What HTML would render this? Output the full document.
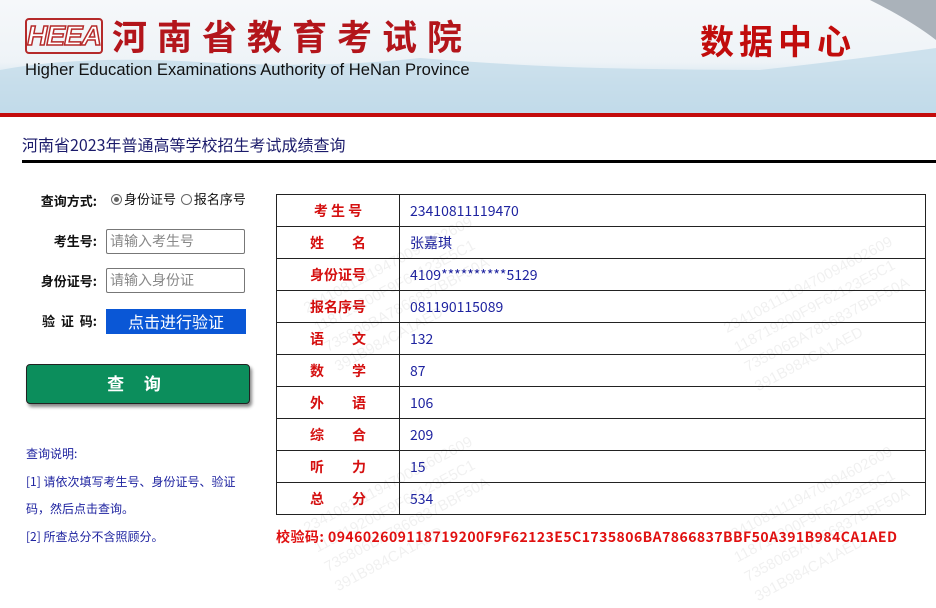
<!DOCTYPE html>
<html><head><meta charset="utf-8"><style>
*{margin:0;padding:0;box-sizing:border-box}
body{width:936px;height:551px;overflow:hidden;background:#fff;font-family:"Liberation Sans","Noto Sans CJK SC",sans-serif;position:relative}
.ab{position:absolute}
#ban{left:0;top:0;width:936px;height:113px;background:linear-gradient(180deg,#f6f8fa 0%,#eef3f7 55%,#cfe2ee 75%,#b6d5e8 100%);overflow:hidden}
#red{left:0;top:113px;width:936px;height:4px;background:#c40c0c}
.logo{left:25px;top:18px;width:78px;height:36px;border:2px solid #b52a2a;border-radius:4px;color:#fff;font:italic bold 28px/32px "Liberation Sans",sans-serif;text-align:center;-webkit-text-stroke:1.5px #b52a2a;letter-spacing:-1px}
.cn{left:112px;top:14px;font:bold 35px/44px "Noto Sans CJK SC",sans-serif;color:#b3151b;letter-spacing:10px}
.en{left:25px;top:60px;font:16.6px/20px "Liberation Sans",sans-serif;color:#111}
.dc{left:700px;top:18px;font:bold 34px/44px "Noto Sans CJK SC",sans-serif;color:#c10c0c;letter-spacing:5px}
.title{left:22px;top:134px;font:16px/20px "Noto Sans CJK SC",sans-serif;color:#1b1b6b}
#ln{left:22px;top:160px;width:914px;height:3px;background:#000}
.lb{font:bold 13px/20px "Noto Sans CJK SC",sans-serif;color:#111;text-align:right;width:80px;left:17px;white-space:nowrap}
.inp{left:106px;width:139px;height:25px;border:1px solid #777;border-radius:2px;font:14px/23px "Noto Sans CJK SC",sans-serif;color:#888;padding-left:3px}
.rad{font:13px/16px "Noto Sans CJK SC",sans-serif;color:#111}
.rad i{display:inline-block;width:11px;height:11px;border:1px solid #666;border-radius:50%;vertical-align:-1px;margin-right:2px;position:relative}
.rad i.on:after{content:"";position:absolute;left:2px;top:2px;width:5px;height:5px;border-radius:50%;background:#666}
.ver{left:106px;top:309px;width:140px;height:25px;background:#0a57d6;color:#fff;font:16px/25px "Noto Sans CJK SC",sans-serif;text-align:center}
.btn{left:26px;top:364px;width:224px;height:40px;background:#0c8e5c;border-radius:4px;box-shadow:2px 3px 3px #888;border:1px solid #222;color:#fff;font:bold 17px/36px "Noto Sans CJK SC",sans-serif;text-align:center;letter-spacing:8px}
.note{left:26px;font:12px/16px "Noto Sans CJK SC",sans-serif;color:#1e23a0}
table{position:absolute;left:276px;top:194px;width:650px;border-collapse:collapse}
td{border:1px solid #222;height:32px;font:14px/16px "Noto Sans CJK SC",sans-serif}
td.k{width:123px;color:#d51010;font-weight:bold;text-align:center}
td.v{color:#1e23a0;padding-left:10px}
.wm{color:rgba(0,0,0,.06);font:15px "Liberation Sans",sans-serif;transform:rotate(-28deg);transform-origin:left top;white-space:nowrap;line-height:22px}
.chk{left:276px;top:527px;font:bold 14px/20px "Noto Sans CJK SC",sans-serif;color:#e01010;letter-spacing:.45px}
</style></head><body>
<div id="ban" class="ab">
<svg class="ab" style="left:0;top:0" width="936" height="113"><path d="M0 70 Q80 55 200 62 T420 58 Q520 66 600 68 T760 70 Q850 60 936 48 L936 113 L0 113Z" fill="#c4dcea" opacity=".8"/><path d="M870 0 L936 0 L936 40 Q910 20 870 0Z" fill="#aab2ba"/></svg>
</div>
<div id="red" class="ab"></div>
<div class="ab logo">HEEA</div>
<div class="ab cn">河南省教育考试院</div>
<div class="ab en">Higher Education Examinations Authority of HeNan Province</div>
<div class="ab dc">数据中心</div>
<div class="ab title">河南省2023年普通高等学校招生考试成绩查询</div>
<div id="ln" class="ab"></div>

<div class="ab lb" style="top:191px">查询方式:</div>
<div class="ab rad" style="left:111px;top:191px"><i class="on"></i>身份证号 <i style="margin-left:2px"></i>报名序号</div>
<div class="ab lb" style="top:231px">考生号:</div>
<div class="ab inp" style="top:229px">请输入考生号</div>
<div class="ab lb" style="top:271px">身份证号:</div>
<div class="ab inp" style="top:268px">请输入身份证</div>
<div class="ab lb" style="top:311px">验&nbsp; 证&nbsp; 码:</div>
<div class="ab ver">点击进行验证</div>
<div class="ab btn">查 询</div>
<div class="ab note" style="top:446px">查询说明:</div>
<div class="ab note" style="top:474px">[1] 请依次填写考生号、身份证号、验证</div>
<div class="ab note" style="top:501px">码，然后点击查询。</div>
<div class="ab note" style="top:529px">[2] 所查总分不含照顾分。</div>

<table>
<tr><td class="k">考 生 号</td><td class="v">23410811119470</td></tr>
<tr><td class="k">姓&emsp;&emsp;名</td><td class="v">张嘉琪</td></tr>
<tr><td class="k">身份证号</td><td class="v">4109**********5129</td></tr>
<tr><td class="k">报名序号</td><td class="v">081190115089</td></tr>
<tr><td class="k">语&emsp;&emsp;文</td><td class="v">132</td></tr>
<tr><td class="k">数&emsp;&emsp;学</td><td class="v">87</td></tr>
<tr><td class="k">外&emsp;&emsp;语</td><td class="v">106</td></tr>
<tr><td class="k">综&emsp;&emsp;合</td><td class="v">209</td></tr>
<tr><td class="k">听&emsp;&emsp;力</td><td class="v">15</td></tr>
<tr><td class="k">总&emsp;&emsp;分</td><td class="v">534</td></tr>
</table>
<div class="ab wm" style="left:300px;top:300px">23410811119470094602609<br>118719200F9F62123E5C1<br>735806BA7866837BBF50A<br>391B984CA1AED</div>
<div class="ab wm" style="left:300px;top:520px">23410811119470094602609<br>118719200F9F62123E5C1<br>735806BA7866837BBF50A<br>391B984CA1AED</div>
<div class="ab wm" style="left:720px;top:320px">23410811119470094602609<br>118719200F9F62123E5C1<br>735806BA7866837BBF50A<br>391B984CA1AED</div>
<div class="ab wm" style="left:720px;top:530px">23410811119470094602609<br>118719200F9F62123E5C1<br>735806BA7866837BBF50A<br>391B984CA1AED</div>
<div class="ab chk">校验码: 094602609118719200F9F62123E5C1735806BA7866837BBF50A391B984CA1AED</div>
</body></html>
